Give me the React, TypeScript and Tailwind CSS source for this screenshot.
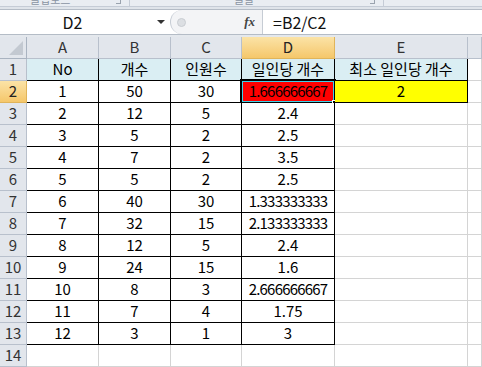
import React from 'react';

const font = { fontFamily: '"Malgun Gothic", "Noto Sans CJK KR", "Noto Sans", sans-serif' };

const cols = ['A', 'B', 'C', 'D', 'E', ''];

type Row = (string | number)[];
const rows: Row[] = [
  ['No', '개수', '인원수', '일인당 개수', '최소 일인당 개수'],
  [1, 50, 30, '1.666666667', 2],
  [2, 12, 5, 2.4, ''],
  [3, 5, 2, 2.5, ''],
  [4, 7, 2, 3.5, ''],
  [5, 5, 2, 2.5, ''],
  [6, 40, 30, '1.333333333', ''],
  [7, 32, 15, '2.133333333', ''],
  [8, 12, 5, 2.4, ''],
  [9, 24, 15, 1.6, ''],
  [10, 8, 3, '2.666666667', ''],
  [11, 7, 4, 1.75, ''],
  [12, 3, 1, 3, ''],
  ['', '', '', '', ''],
];

const App: React.FC = () => {
  return (
    <div className="w-[482px] h-[367px] overflow-hidden bg-white flex flex-col" style={font}>
      {/* ribbon group labels, cut off by the crop */}
      <div className="h-[10px] bg-[#e9edf2] flex items-end text-[11px] leading-none text-[#8a94a2] border-b border-[#c5ccd6] overflow-hidden">
        <div className="w-[130px] h-full border-r border-[#c5ccd6] relative">
          <span className="absolute left-[30px] -top-[6px]">클립보드</span>
          <span className="absolute right-[8px] top-[0px] w-[5px] h-[4px] border-r border-b border-[#9aa3ae]" />
        </div>
        <div className="w-[254px] h-full border-r border-[#c5ccd6] relative">
          <span className="absolute left-[104px] -top-[6px]">글꼴</span>
          <span className="absolute right-[8px] top-[0px] w-[5px] h-[4px] border-r border-b border-[#9aa3ae]" />
        </div>
        <div className="flex-1 h-full" />
      </div>
      <div className="h-[3px] bg-[#dfe4ea]" />
      {/* formula bar */}
      <div className="h-[26px] flex items-stretch bg-white border-t border-b border-[#b4bcc6]">
        <div className="w-[170px] flex items-center">
          <span className="flex-1 text-center text-[16px] text-[#111] pr-[12px]">D2</span>
          <span className="mr-[5px] w-0 h-0 border-l-[4px] border-r-[4px] border-t-[4px] border-l-transparent border-r-transparent border-t-[#333]" />
        </div>
        <div className="w-[93px] flex items-center bg-[#f3f4f6] border-r border-[#c6ccd4] rounded-l-full border-l border-[#c6ccd4]">
          <span className="ml-[6px] w-[9px] h-[9px] rounded-full bg-[#dcdfe3] border border-[#c9cdd2]" />
          <span className="ml-auto mr-[7px] text-[13px] italic font-bold text-[#444]" style={{ fontFamily: '"Liberation Serif", serif' }}>fx</span>
        </div>
        <div className="flex-1 flex items-center pl-[10px] text-[16px] text-[#111]">=B2/C2</div>
      </div>
      <div className="h-[3px] bg-[#e4e8ed]" />
      {/* sheet */}
      <div className="grid grid-cols-[27px_72px_72px_71px_93px_133px_1fr] auto-rows-[22px] text-[15px] text-black">
        <div className="bg-[#e2e6ec] border-r border-b border-[#a9b3c0] relative">
          <span className="absolute right-[3px] bottom-[3px] w-0 h-0" style={{ borderBottom: '14px solid #c3c9d1', borderLeft: '14px solid transparent' }} />
        </div>
        {cols.map((c, i) => (
          <div
            key={i}
            className={
              'flex items-center justify-center border-r border-b ' +
              (c === 'D'
                ? 'bg-gradient-to-b from-[#fbe3a6] to-[#f5c76a] border-[#e0b45a] text-[#222]'
                : 'bg-[#e2e6ec] border-[#b8c0cc] text-[#333]')
            }
          >
            {c}
          </div>
        ))}
        {rows.map((r, ri) => {
          const n = ri + 1;
          const cells = [...r, ''];
          return (
            <React.Fragment key={ri}>
              <div
                className={
                  'flex items-center justify-center border-r border-b ' +
                  (n === 2
                    ? 'bg-gradient-to-b from-[#fbe3a6] to-[#f5c76a] border-[#e0b45a] text-[#222]'
                    : 'bg-[#e2e6ec] border-[#b8c0cc] text-[#333]')
                }
              >
                {n}
              </div>
              {cells.map((v, ci) => {
                const boxed = (n <= 13 && ci <= 3) || (n <= 2 && ci === 4);
                let bg = 'bg-white';
                if (n === 1 && ci <= 4) bg = 'bg-[#daeef3]';
                if (n === 2 && ci === 3) bg = 'bg-[#ff0000]';
                if (n === 2 && ci === 4) bg = 'bg-[#ffff00]';
                const sel = n === 2 && ci === 3;
                const long = String(v).length > 8 && typeof v === 'string' && /^[0-9.]+$/.test(v);
                return (
                  <div
                    key={ci}
                    className={
                      'relative flex items-center justify-center whitespace-nowrap border-r border-b ' +
                      bg +
                      ' ' +
                      (boxed ? 'border-black' : 'border-[#d4d4d4]') +
                      (long ? ' tracking-[-0.8px]' : '')
                    }
                  >
                    {v}
                    {sel && (
                      <>
                        <span className="absolute -left-[2px] -top-[2px] -right-[2px] -bottom-[2px] border-2 border-black" />
                        <span className="absolute left-0 top-0 right-0 bottom-0 border border-[#3fd0e8]" />
                        <span className="absolute -right-[4px] -bottom-[4px] w-[6px] h-[6px] bg-black border border-white" />
                      </>
                    )}
                  </div>
                );
              })}
            </React.Fragment>
          );
        })}
      </div>
    </div>
  );
};

export default App;
